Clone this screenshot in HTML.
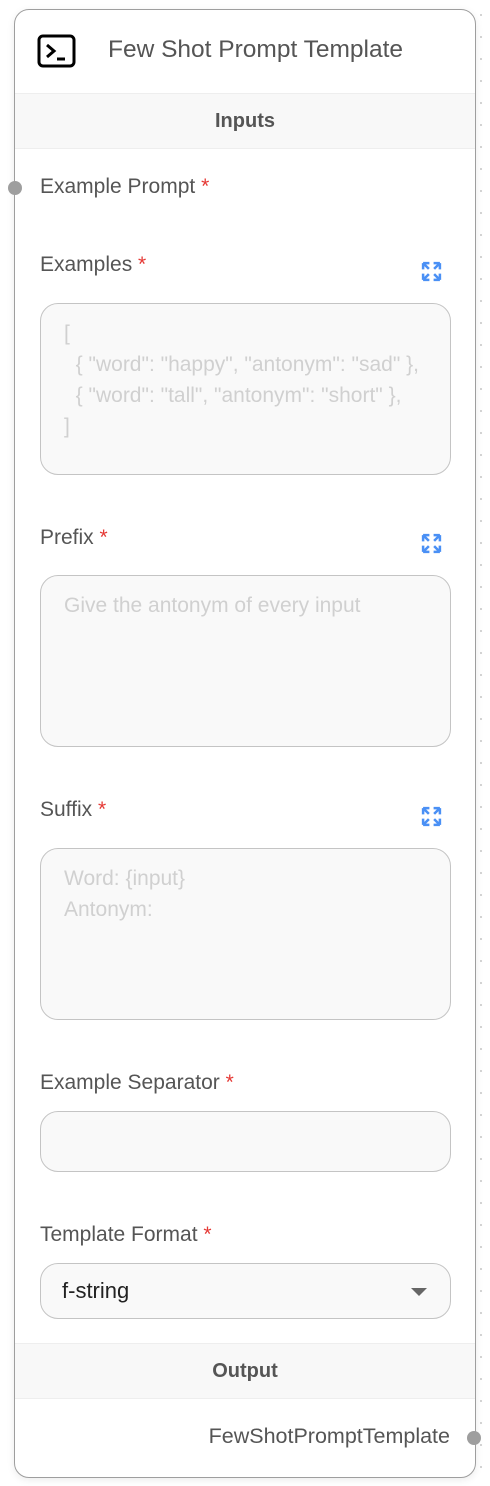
<!DOCTYPE html>
<html><head><meta charset="utf-8"><style>
*{margin:0;padding:0;box-sizing:border-box}
body{width:490px;height:1486px;background:#fff;position:relative;overflow:hidden;font-family:"Liberation Sans",sans-serif;
background-image:radial-gradient(circle,#ccc 0.8px,transparent 1.2px);background-size:22px 22px;background-position:8px 4px}
.card{position:absolute;left:14px;top:9px;width:462px;height:1469px;border:1px solid #9e9e9e;border-radius:15px;background:#fff;box-shadow:0 2px 8px rgba(0,0,0,.08);overflow:hidden}
.a{position:absolute}
.band{position:absolute;left:0;right:0;height:56px;background:#f8f8f8;border-top:1px solid #eee;border-bottom:1px solid #eee;text-align:center;line-height:54px;font-size:20px;font-weight:bold;color:#555}
.lbl{position:absolute;left:25px;font-size:21px;color:#555;white-space:nowrap}
.lbl b{color:#e53935;font-weight:normal}
.ta{position:absolute;left:25px;width:411px;border:1px solid #c4c4c4;border-radius:18px;background:#f9f9f9;padding:14px 0 0 23px;font-size:21px;line-height:31px;color:#d0d0d0;white-space:pre}
.ic{position:absolute;left:406px}
.h{position:absolute;width:14px;height:14px;border-radius:50%;background:#9e9e9e}
</style></head><body>
<div class="card">
 <svg class="a" style="left:22px;top:24px" width="40" height="36" viewBox="0 0 40 36"><rect x="2" y="2" width="35" height="30" rx="4" fill="none" stroke="#000" stroke-width="3"/><path d="M10 11l7 6-7 6" fill="none" stroke="#000" stroke-width="3"/><path d="M20 25h8" stroke="#000" stroke-width="3"/></svg>
 <div class="a" style="left:93px;top:26px;font-size:24.5px;color:#555">Few Shot Prompt Template</div>
 <div class="band" style="top:83px">Inputs</div>
 <div class="lbl" style="top:165px">Example Prompt <b>*</b></div>

 <div class="lbl" style="top:243px">Examples <b>*</b></div>
 <svg class="ic" style="top:251px" width="21" height="21" viewBox="0 0 20 20"><g stroke="#4a90f5" stroke-width="2.4" fill="none"><path d="M2 2l5.5 5.5M2 2h6M2 2v6M18 2l-5.5 5.5M18 2h-6M18 2v6M2 18l5.5-5.5M2 18h6M2 18v-6M18 18l-5.5-5.5M18 18h-6M18 18v-6"/></g></svg>
 <div class="ta" style="top:293px;height:172px">[
  { "word": "happy", "antonym": "sad" },
  { "word": "tall", "antonym": "short" },
]</div>

 <div class="lbl" style="top:516px">Prefix <b>*</b></div>
 <svg class="ic" style="top:523px" width="21" height="21" viewBox="0 0 20 20"><g stroke="#4a90f5" stroke-width="2.4" fill="none"><path d="M2 2l5.5 5.5M2 2h6M2 2v6M18 2l-5.5 5.5M18 2h-6M18 2v6M2 18l5.5-5.5M2 18h6M2 18v-6M18 18l-5.5-5.5M18 18h-6M18 18v-6"/></g></svg>
 <div class="ta" style="top:565px;height:172px">Give the antonym of every input</div>

 <div class="lbl" style="top:788px">Suffix <b>*</b></div>
 <svg class="ic" style="top:796px" width="21" height="21" viewBox="0 0 20 20"><g stroke="#4a90f5" stroke-width="2.4" fill="none"><path d="M2 2l5.5 5.5M2 2h6M2 2v6M18 2l-5.5 5.5M18 2h-6M18 2v6M2 18l5.5-5.5M2 18h6M2 18v-6M18 18l-5.5-5.5M18 18h-6M18 18v-6"/></g></svg>
 <div class="ta" style="top:838px;height:172px">Word: {input}
Antonym:</div>

 <div class="lbl" style="top:1061px">Example Separator <b>*</b></div>
 <div class="ta" style="top:1101px;height:61px"></div>

 <div class="lbl" style="top:1213px">Template Format <b>*</b></div>
 <div class="ta" style="top:1253px;height:56px;padding:0 0 0 21px;line-height:54px;color:#222;font-size:22px">f-string</div>
 <svg class="a" style="left:396px;top:1278px" width="16" height="9"><path d="M0 0h16L8 8z" fill="#666"/></svg>

 <div class="band" style="top:1333px">Output</div>
 <div class="a" style="right:25px;top:1414px;font-size:21.5px;color:#555">FewShotPromptTemplate</div>
</div>
<div class="h" style="left:8px;top:181px"></div>
<div class="h" style="left:467px;top:1431px"></div>
</body></html>
